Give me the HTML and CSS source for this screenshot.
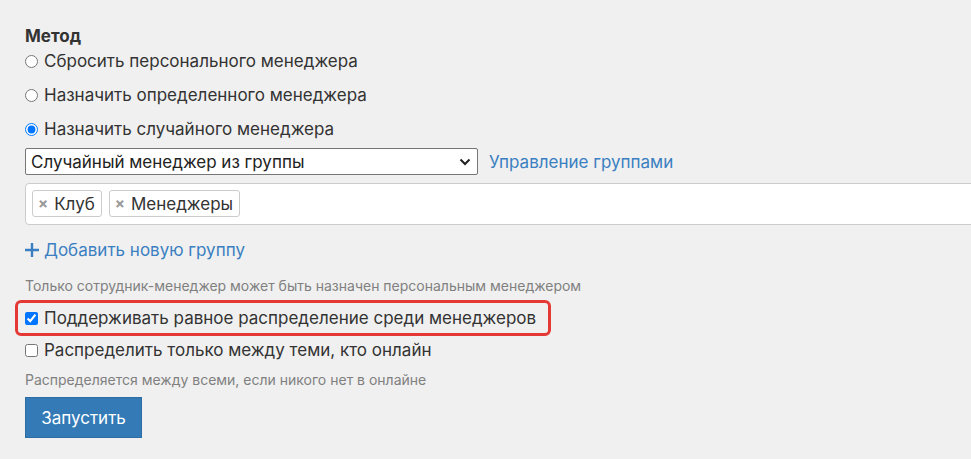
FILE: index.html
```html
<!DOCTYPE html>
<html lang="ru">
<head>
    <meta charset="UTF-8">
    <title>Метод</title>
    <link rel="stylesheet" href="styles.css">
</head>
<body>
    <form class="method-form">
        <div class="form-title">Метод</div>

        <label class="radio-row"><input type="radio" name="method"> Сбросить персонального менеджера</label>
        <label class="radio-row"><input type="radio" name="method"> Назначить определенного менеджера</label>
        <label class="radio-row radio-last"><input type="radio" name="method" checked> Назначить случайного менеджера</label>

        <div class="select-row">
            <div class="fake-select">
                <span>Случайный менеджер из группы</span>
                <svg class="caret" width="12" height="8" viewBox="0 0 12 8"><path d="M1.5 1.5 6 6l4.5-4.5" fill="none" stroke="#222" stroke-width="2"/></svg>
            </div>
            <a href="#" class="link">Управление группами</a>
        </div>

        <div class="tag-box">
            <span class="tag"><span class="tag-x">×</span>Клуб</span>
            <span class="tag"><span class="tag-x">×</span>Менеджеры</span>
        </div>

        <a href="#" class="link add-group">
            <svg class="plus" width="14" height="14" viewBox="0 0 14 14"><path d="M7 0v14M0 7h14" stroke="#3a7fc1" stroke-width="2.4"/></svg>
            Добавить новую группу
        </a>

        <div class="help-text">Только сотрудник-менеджер может быть назначен персональным менеджером</div>

        <div class="highlight">
            <label class="check-row"><input type="checkbox" checked> Поддерживать равное распределение среди менеджеров</label>
        </div>
        <label class="check-row"><input type="checkbox"> Распределить только между теми, кто онлайн</label>

        <div class="help-text help-online">Распределяется между всеми, если никого нет в онлайне</div>

        <button type="button" class="run-button">Запустить</button>
    </form>
</body>
</html>
```

FILE: styles.css
```css
body {
    margin: 0;
    background: #f0f0f0;
    font-family: Inter, "Noto Sans", sans-serif;
    color: #333;
    overflow: hidden;
}
.method-form {
    padding: 25px 0 0 25px;
    width: 1000px;
}
.form-title {
    font-weight: 700;
    font-size: 17px;
    line-height: 22px;
    margin-bottom: 3px;
}
.radio-row,
.check-row {
    display: flex;
    align-items: center;
    font-size: 17px;
    line-height: 22px;
    height: 22px;
}
.radio-row {
    margin-bottom: 12px;
}
.radio-row input,
.check-row input {
    margin: 0 6px 0 0;
    width: 13px;
    height: 13px;
}
.radio-row.radio-last {
    margin-bottom: 8px;
}
.select-row {
    display: flex;
    align-items: center;
    gap: 11px;
}
.fake-select {
    box-sizing: border-box;
    width: 453px;
    height: 27px;
    border: 1px solid #767676;
    border-radius: 2px;
    background: #fff;
    display: flex;
    align-items: center;
    justify-content: space-between;
    padding: 0 6px 0 5px;
    font-size: 17px;
    color: #222;
}
.link {
    color: #3a7fc1;
    text-decoration: none;
    font-size: 17px;
}
.tag-box {
    box-sizing: border-box;
    margin-top: 8px;
    height: 42px;
    background: #fff;
    border: 1px solid #ccc;
    border-radius: 4px 0 0 4px;
    padding: 6px;
    display: flex;
    gap: 7px;
}
.tag {
    box-sizing: border-box;
    height: 27px;
    border: 1px solid #ccc;
    border-radius: 3px;
    padding: 0 6px 0 5px;
    display: flex;
    align-items: center;
    font-size: 17px;
    color: #333;
}
.tag-x {
    color: #999;
    font-weight: 700;
    font-size: 15px;
    margin-right: 6px;
}
.add-group {
    display: flex;
    align-items: center;
    gap: 5px;
    margin-top: 14px;
    height: 22px;
}
.help-text {
    font-size: 14px;
    line-height: 18px;
    color: #808080;
    margin-top: 16px;
}
.highlight {
    display: inline-block;
    margin: 5px 0 3px -10px;
    padding: 4px 12px 4px 7px;
    border: 3px solid #e53935;
    border-radius: 6px;
}
.help-online {
    margin-top: 10px;
}
.run-button {
    margin-top: 8px;
    width: 117px;
    height: 41px;
    background: #337ab7;
    border: 1px solid #2e6da4;
    color: #fff;
    font-family: Inter, "Noto Sans", sans-serif;
    font-size: 17px;
}
```
